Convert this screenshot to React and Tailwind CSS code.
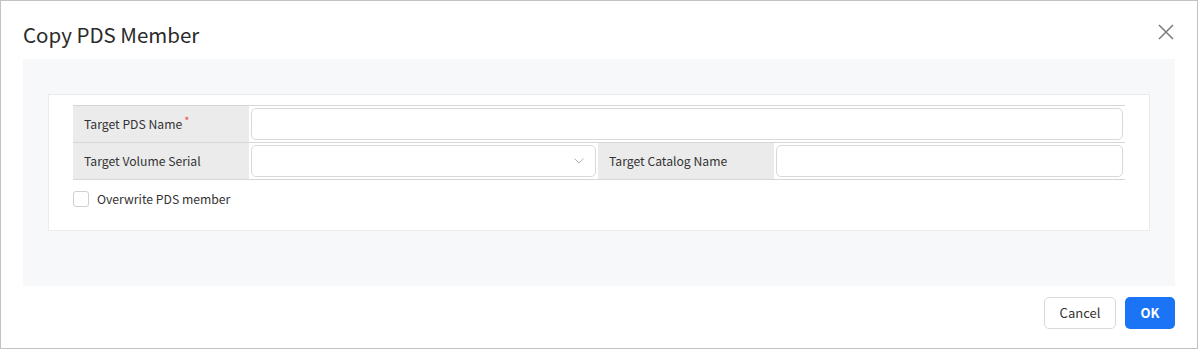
import React from 'react';

const font = { fontFamily: '"Noto Sans CJK KR", "Noto Sans", sans-serif' };

const ChevronDown = () => (
  <svg width="10" height="6" viewBox="0 0 10 6" fill="none">
    <path d="M0.5 0.5 L5 5 L9.5 0.5" stroke="#b5b5b5" strokeWidth="1" />
  </svg>
);

const CloseIcon = () => (
  <svg width="16" height="16" viewBox="0 0 16 16" fill="none">
    <path d="M1 1 L15 15 M15 1 L1 15" stroke="#7a7a7a" strokeWidth="1.5" />
  </svg>
);

const LabelCell = ({ children }) => (
  <div className="w-[176px] shrink-0 bg-[#ebebeb] flex items-center pl-[11px] text-[12.2px] text-[#333]">
    {children}
  </div>
);

const CopyPdsMember = () => {
  return (
    <div
      className="w-[1198px] h-[349px] border border-[#c2c2c2] bg-white flex flex-col"
      style={font}
    >
      {/* Header */}
      <div className="h-[58px] flex items-start justify-between pl-[22px] pr-[23px] pt-[19px]">
        <h2 className="text-[20.5px] leading-[28px] text-[#2b2b2b]">Copy PDS Member</h2>
        <button className="mt-[4px]">
          <CloseIcon />
        </button>
      </div>

      {/* Body */}
      <div className="mx-[22px] h-[227px] bg-[#f7f8fa] pt-[35px] px-[25px]">
        <div className="h-[137px] bg-white border border-[#ebebeb] pt-[10px] px-[24px]">
          <div className="border-t border-[#d6d6d6]">
            {/* Row 1 */}
            <div className="flex h-[37px] border-b border-[#d6d6d6]">
              <LabelCell>
                Target PDS Name<span className="text-[#f04848] text-[11px] ml-[2px] -mt-[7px]">*</span>
              </LabelCell>
              <div className="flex-1 px-[2px] py-[2px]">
                <input className="w-full h-full border border-[#d9d9d9] rounded-[5px] outline-none px-2 text-[12px]" />
              </div>
            </div>
            {/* Row 2 */}
            <div className="flex h-[37px] border-b border-[#d6d6d6]">
              <LabelCell>Target Volume Serial</LabelCell>
              <div className="w-[349px] shrink-0 px-[2px] py-[2px]">
                <div className="w-full h-full border border-[#d9d9d9] rounded-[5px] flex items-center justify-end pr-[11px]">
                  <ChevronDown />
                </div>
              </div>
              <LabelCell>Target Catalog Name</LabelCell>
              <div className="flex-1 px-[2px] py-[2px]">
                <input className="w-full h-full border border-[#d9d9d9] rounded-[5px] outline-none px-2 text-[12px]" />
              </div>
            </div>
          </div>

          {/* Checkbox */}
          <label className="flex items-center gap-[8px] mt-[10px]">
            <span className="w-[16px] h-[16px] border border-[#cfcfcf] rounded-[3px] bg-white" />
            <span className="text-[12.2px] text-[#333]">Overwrite PDS member</span>
          </label>
        </div>
      </div>

      {/* Footer */}
      <div className="flex justify-end gap-[9px] pr-[22px] pt-[11px]">
        <button className="w-[72px] h-[32px] border border-[#d9d9d9] rounded-[5px] text-[13px] text-[#333] bg-white">
          Cancel
        </button>
        <button className="w-[50px] h-[32px] rounded-[5px] bg-[#1a74f5] text-white text-[13px] font-bold">
          OK
        </button>
      </div>
    </div>
  );
};

export default function App() {
  return <CopyPdsMember />;
}
